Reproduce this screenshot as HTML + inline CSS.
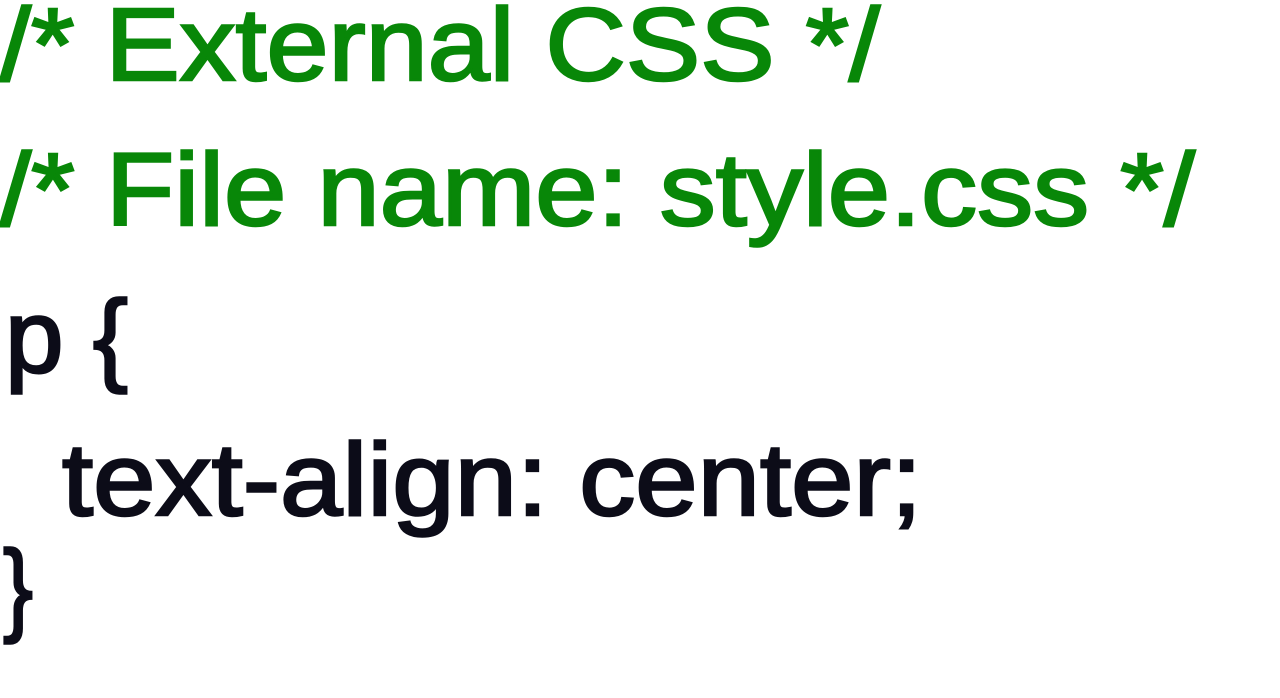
<!DOCTYPE html>
<html><head><meta charset="utf-8"><style>
html,body{margin:0;padding:0;background:#fff;width:1280px;height:698px;overflow:hidden}
svg{display:block}
text{font-family:"Liberation Sans",sans-serif;font-size:103px;stroke-width:2.5px}
.g{fill:#088708;stroke:#088708}.k{fill:#0c0c18;stroke:#0c0c18}
</style></head><body>
<svg width="1280" height="698" viewBox="0 0 1280 698">
<text class="g" x="0" y="80" textLength="880" lengthAdjust="spacingAndGlyphs">/* External CSS */</text>
<text class="g" x="0" y="225" textLength="1195" lengthAdjust="spacingAndGlyphs">/* File name: style.css */</text>
<text class="k" x="5" y="372" textLength="123" lengthAdjust="spacingAndGlyphs">p {</text>
<text class="k" x="62" y="515" textLength="860" lengthAdjust="spacingAndGlyphs">text-align: center;</text>
<text class="k" x="3" y="622" textLength="30" lengthAdjust="spacingAndGlyphs">}</text>
</svg>
</body></html>
